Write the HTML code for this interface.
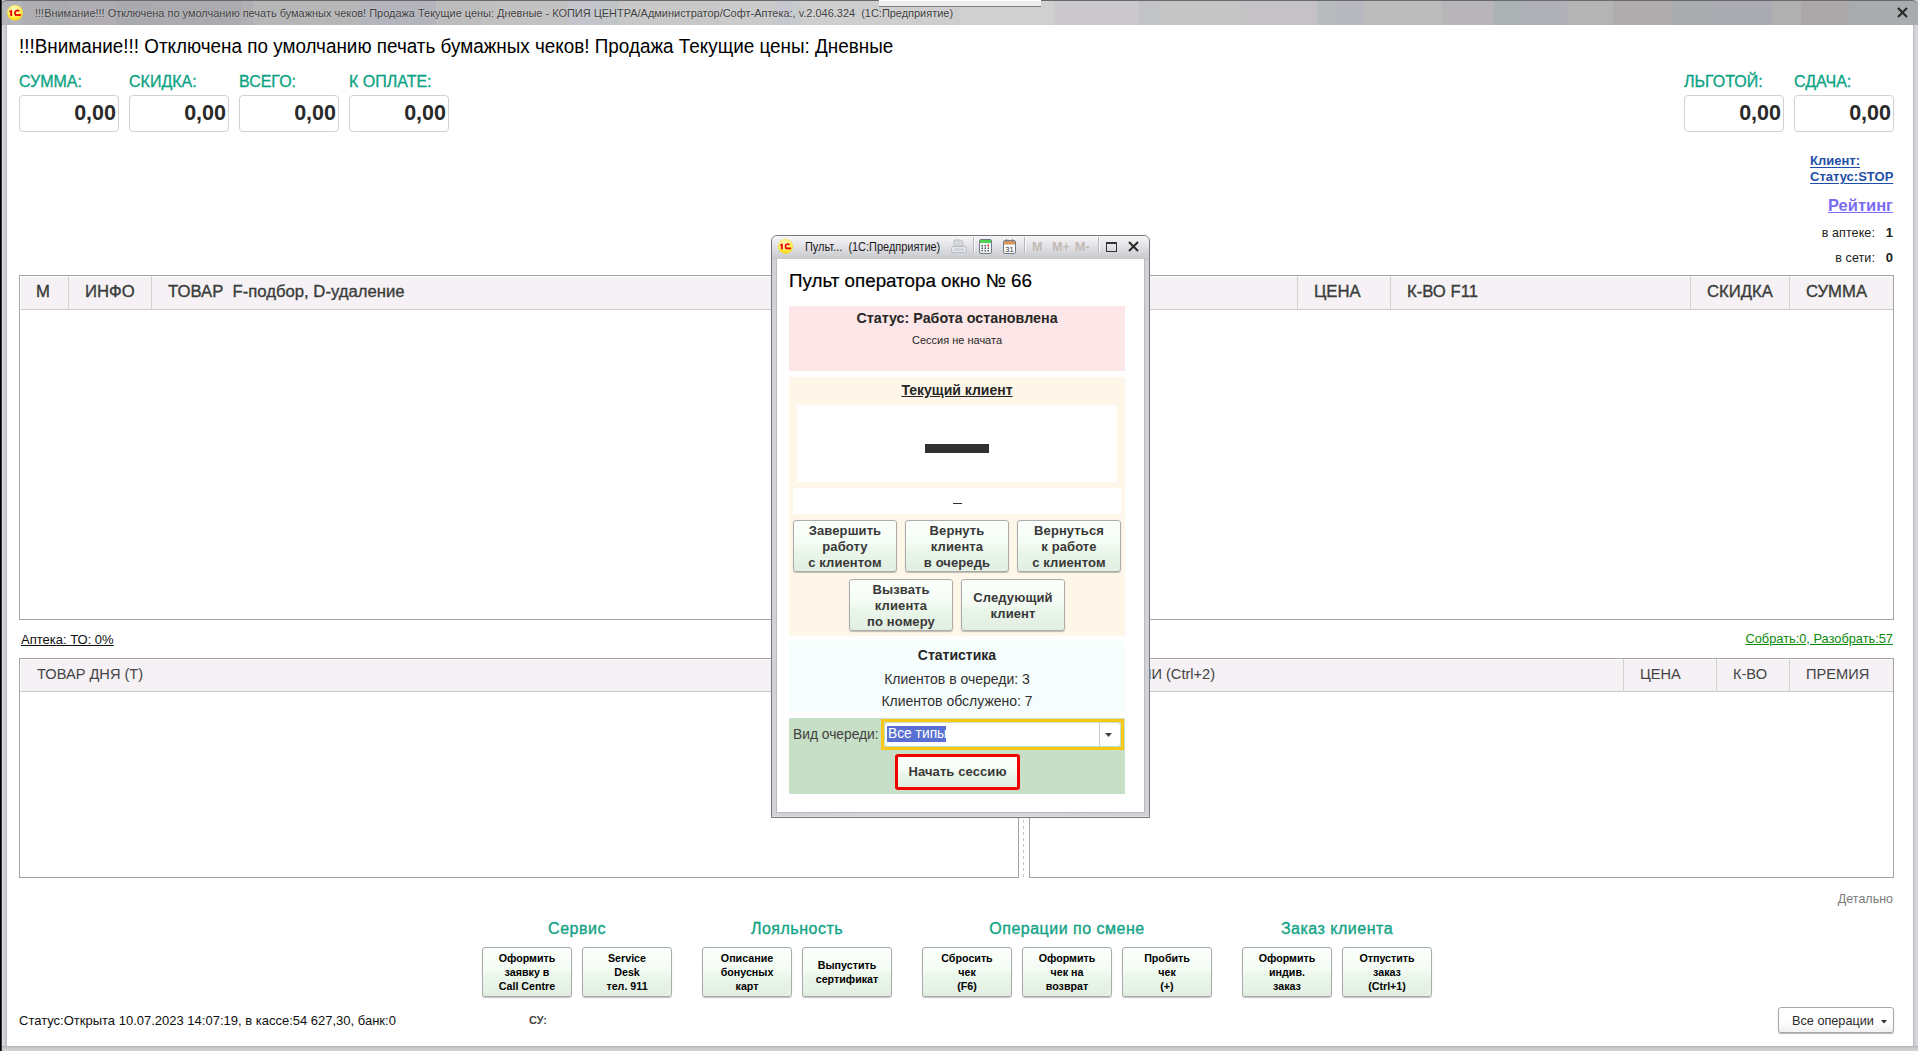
<!DOCTYPE html>
<html><head><meta charset="utf-8">
<style>
*{box-sizing:border-box}
html,body{margin:0;padding:0}
body{width:1918px;height:1051px;overflow:hidden;position:relative;background:#c4c6ca;font-family:"Liberation Sans",sans-serif;color:#000}
.a{position:absolute}
.t{position:absolute;white-space:nowrap;line-height:1}
/* outer window */
#lstrip{left:0;top:0;width:2px;height:1051px;background:linear-gradient(90deg,#000 0,#000 1px,#3a3a3a 1px)}
#frameL{left:2px;top:25px;width:5px;height:1026px;background:linear-gradient(90deg,#dcdce0 0,#d6d6da 1px,#cfcfd3 3px,#c4c4c8 4px,#b4b6ba 5px)}
#frameR{left:1913px;top:25px;width:5px;height:1026px;background:linear-gradient(90deg,#b4b8bc,#d4d4d8 40%,#d8d8dc)}
#frameB{left:2px;top:1046px;width:1916px;height:5px;background:linear-gradient(180deg,#b0b2b6,#c8cacd 40%,#cfd1d4)}
#title{left:1px;top:0;width:1917px;height:25px;border-top:1px solid #6a6a6e;border-radius:6px 6px 0 0;background:linear-gradient(90deg,#b2b4ba 0px,#b2b4ba 22px,#adadb2 22px,#adadb2 45px,#aaacb0 45px,#aaacb0 69px,#b0aeb2 69px,#b0aeb2 115px,#a9a9b0 115px,#a9a9b0 150px,#ababaf 150px,#ababaf 240px,#b0b0b4 240px,#b0b0b4 252px,#b6b6b6 252px,#b6b6b6 358px,#b4b4bc 358px,#b4b4bc 435px,#bcbcbc 435px,#bcbcbc 480px,#c0c0c0 480px,#c0c0c0 502px,#c2c2c2 502px,#c2c2c2 568px,#c4c4cc 568px,#c4c4cc 598px,#c0c6c8 598px,#c0c6c8 618px,#c8c8c8 618px,#c8c8c8 720px,#cacaca 720px,#cacaca 776px,#c6c6d0 776px,#c6c6d0 790px,#c6cccc 790px,#c6cccc 800px,#cecece 800px,#cecece 960px,#d0d0d0 960px,#d0d0d0 1053px,#cbc9cc 1053px,#cbc9cc 1138px,#c2c4c8 1138px,#c2c4c8 1161px,#c6c6c6 1161px,#c6c6c6 1240px,#c4c2c4 1240px,#c4c2c4 1316px,#b8bcbe 1316px,#b8bcbe 1333px,#b8b8c0 1333px,#b8b8c0 1363px,#bcbcbc 1363px,#bcbcbc 1440px,#b8b6b8 1440px,#b8b6b8 1493px,#aab2b2 1493px,#aab2b2 1520px,#b0b0b8 1520px,#b0b0b8 1566px,#b4b4b4 1566px,#b4b4b4 1612px,#b0acae 1612px,#b0acae 1671px,#a8acae 1671px,#a8acae 1708px,#aaaab2 1708px,#aaaab2 1771px,#b0b0b0 1771px,#b0b0b0 1800px,#aca8aa 1800px,#aca8aa 1848px,#a8acae 1848px,#a8acae 1918px)}
#content{left:7px;top:25px;width:1906px;height:1021px;background:#fff}
.lbl{color:#0aa283;font-size:16px;-webkit-text-stroke:.3px #0aa283}
.box{position:absolute;width:100px;height:37px;border:1px solid #d2d2d2;border-radius:4px;background:#fff}
.num{position:absolute;right:2px;top:7px;font-weight:bold;font-size:21.5px;color:#2a2a2a;line-height:1}
.tbl{position:absolute;border:1px solid #a4a4a4;background:#fff}
.th{position:absolute;left:0;top:0;right:0;background:#f5f1f5;border-bottom:1px solid #c9c9c9;border-top:1px solid #fff;border-left:1px solid #fff}
.sep{position:absolute;top:0;width:1px;background:#d2d2d2}
.hd{position:absolute;white-space:nowrap;line-height:1;color:#3a3c3a;-webkit-text-stroke:.35px #3a3c3a}
.btn{position:absolute;border:1px solid #a9aca9;border-radius:3px;background:linear-gradient(180deg,#fbfffb 0%,#f4fbf4 45%,#e9f6e9 60%,#e3eee3 100%);box-shadow:0 1px 1px rgba(0,0,0,.25);text-align:center;font-weight:bold}
.grp{top:921px;text-align:center;font-size:16px;letter-spacing:.5px;color:#12a386;-webkit-text-stroke:.35px #12a386}
.bb{font-size:10.7px;line-height:14px;color:#000}
.mb{font-size:13px;line-height:16px;color:#383838;letter-spacing:.1px}
</style></head><body>
<div id="title" class="a"></div>
<div id="lstrip" class="a"></div>
<div id="frameL" class="a"></div>
<div id="frameR" class="a"></div>
<div id="frameB" class="a"></div>
<div id="content" class="a"></div>

<!-- title bar -->
<svg width="0" height="0" style="position:absolute"><defs>
<radialGradient id="yg" cx="45%" cy="30%" r="70%"><stop offset="0" stop-color="#fffcc0"/><stop offset=".55" stop-color="#fff070"/><stop offset="1" stop-color="#ffd800"/></radialGradient>
<symbol id="logo1c" viewBox="0 0 18 18"><circle cx="9" cy="8.75" r="7.8" fill="url(#yg)"/><circle cx="9" cy="8.75" r="7.6" fill="none" stroke="#e8c830" stroke-width=".5" opacity=".6"/>
<path d="M3 7.3L5.3 5.9H6.1V12H4.3V7.9L3.3 8.3Z" fill="#e80000"/>
<path d="M13.2 7.2A2.4 2.4 0 1 0 9.6 10.6" fill="none" stroke="#e80000" stroke-width="1.7"/>
<rect x="9" y="10.1" width="5.8" height="1.8" fill="#e80000"/></symbol></defs></svg>
<svg class="a" style="left:6px;top:4px" width="18" height="18"><use href="#logo1c"/></svg>
<div class="t" style="left:35px;top:7px;font-size:11.6px;color:#404040;transform:scaleX(.945);transform-origin:0 0;text-shadow:0 0 2px rgba(255,255,255,.5)">!!!Внимание!!! Отключена по умолчанию печать бумажных чеков! Продажа Текущие цены: Дневные - КОПИЯ ЦЕНТРА/Администратор/Софт-Аптека:, v.2.046.324&nbsp; (1С:Предприятие)</div>
<div class="a" style="left:879px;top:0;width:162px;height:7px;background:linear-gradient(180deg,#fff 0,#fff 1px,#eeeeee 1px,#eeeeee 6px,#808080 6px)"></div>
<svg class="a" style="left:1896px;top:6px" width="13" height="13" viewBox="0 0 13 13"><path d="M2 2L11 11M11 2L2 11" stroke="#2a2a2a" stroke-width="2.2"/></svg>

<!-- headline -->
<div class="t" style="left:19px;top:37px;font-size:19.3px;transform:scaleX(.979);transform-origin:0 0">!!!Внимание!!! Отключена по умолчанию печать бумажных чеков! Продажа Текущие цены: Дневные</div>

<!-- totals -->
<div class="t lbl" style="left:19px;top:74px">СУММА:</div>
<div class="t lbl" style="left:129px;top:74px">СКИДКА:</div>
<div class="t lbl" style="left:239px;top:74px">ВСЕГО:</div>
<div class="t lbl" style="left:349px;top:74px">К ОПЛАТЕ:</div>
<div class="t lbl" style="left:1684px;top:74px">ЛЬГОТОЙ:</div>
<div class="t lbl" style="left:1794px;top:74px">СДАЧА:</div>
<div class="box" style="left:19px;top:95px"><span class="num">0,00</span></div>
<div class="box" style="left:129px;top:95px"><span class="num">0,00</span></div>
<div class="box" style="left:239px;top:95px"><span class="num">0,00</span></div>
<div class="box" style="left:349px;top:95px"><span class="num">0,00</span></div>
<div class="box" style="left:1684px;top:95px"><span class="num">0,00</span></div>
<div class="box" style="left:1794px;top:95px"><span class="num">0,00</span></div>

<!-- right links -->
<div class="t" style="left:1810px;top:154px;font-size:13px;font-weight:bold;color:#1f4fa8;text-decoration:underline;text-underline-offset:2px">Клиент:</div>
<div class="t" style="left:1810px;top:170px;font-size:13px;font-weight:bold;color:#1f4fa8;text-decoration:underline;text-underline-offset:2px">Статус:STOP</div>
<div class="t" style="right:25px;top:197px;font-size:16.5px;font-weight:bold;color:#7b6cf0;text-decoration:underline">Рейтинг</div>
<div class="t" style="right:43px;top:227px;font-size:12.5px;letter-spacing:.1px;color:#202020">в аптеке:</div>
<div class="t" style="right:25px;top:226px;font-size:13px;font-weight:bold;color:#202020">1</div>
<div class="t" style="right:43px;top:252px;font-size:12.5px;letter-spacing:.1px;color:#202020">в сети:</div>
<div class="t" style="right:25px;top:251px;font-size:13px;font-weight:bold;color:#202020">0</div>

<!-- main table -->
<div class="tbl" style="left:19px;top:275px;width:1875px;height:345px">
  <div class="th" style="height:34px"></div>
  <div class="sep" style="left:48px;height:34px"></div>
  <div class="sep" style="left:131px;height:34px"></div>
  <div class="sep" style="left:1277px;height:34px"></div>
  <div class="sep" style="left:1370px;height:34px"></div>
  <div class="sep" style="left:1670px;height:34px"></div>
  <div class="sep" style="left:1769px;height:34px"></div>
  <div class="hd" style="left:16px;top:8px;font-size:16.7px">М</div>
  <div class="hd" style="left:65px;top:8px;font-size:16.7px">ИНФО</div>
  <div class="hd" style="left:148px;top:8px;font-size:16.7px">ТОВАР&nbsp; F-подбор, D-удаление</div>
  <div class="hd" style="left:1294px;top:8px;font-size:16.7px">ЦЕНА</div>
  <div class="hd" style="left:1387px;top:8px;font-size:16.7px">К-ВО F11</div>
  <div class="hd" style="left:1687px;top:8px;font-size:16.7px">СКИДКА</div>
  <div class="hd" style="left:1786px;top:8px;font-size:16.7px">СУММА</div>
</div>

<div class="t" style="left:21px;top:633px;font-size:13px;color:#101010;text-decoration:underline">Аптека: ТО: 0%</div>
<div class="t" style="right:25px;top:633px;font-size:12.8px;color:#0a8a0a;text-decoration:underline">Собрать:0, Разобрать:57</div>

<!-- bottom tables -->
<div class="tbl" style="left:19px;top:658px;width:1000px;height:220px">
  <div class="th" style="height:33px"></div>
  <div class="hd" style="left:17px;top:7px;font-size:15.3px;color:#444;-webkit-text-stroke:0;transform:scaleX(.955);transform-origin:0 0">ТОВАР ДНЯ (Т)</div>
</div>
<div class="a" style="left:1023px;top:820px;width:1px;height:57px;background:repeating-linear-gradient(180deg,#c8c8c8 0 3px,transparent 3px 6px)"></div>
<div class="tbl" style="left:1029px;top:658px;width:865px;height:220px">
  <div class="th" style="height:33px"></div>
  <div class="sep" style="left:593px;height:33px"></div>
  <div class="sep" style="left:686px;height:33px"></div>
  <div class="sep" style="left:759px;height:33px"></div>
  <div class="hd" style="right:678px;top:7px;font-size:15.3px;color:#444;-webkit-text-stroke:0;transform:scaleX(.955);transform-origin:100% 0">АКЦИИ (Ctrl+2)</div>
  <div class="hd" style="left:610px;top:7px;font-size:15.3px;color:#444;-webkit-text-stroke:0;transform:scaleX(.955);transform-origin:0 0">ЦЕНА</div>
  <div class="hd" style="left:703px;top:7px;font-size:15.3px;color:#444;-webkit-text-stroke:0;transform:scaleX(.955);transform-origin:0 0">К-ВО</div>
  <div class="hd" style="left:776px;top:7px;font-size:15.3px;color:#444;-webkit-text-stroke:0;transform:scaleX(.955);transform-origin:0 0">ПРЕМИЯ</div>
</div>

<div class="t" style="right:25px;top:893px;font-size:12.5px;color:#7a7a7a">Детально</div>

<!-- groups -->
<div class="t grp" style="left:482px;width:190px">Сервис</div>
<div class="t grp" style="left:702px;width:190px">Лояльность</div>
<div class="t grp" style="left:922px;width:290px">Операции по смене</div>
<div class="t grp" style="left:1242px;width:190px">Заказ клиента</div>

<div class="btn bb" style="left:482px;top:947px;width:90px;height:50px;padding-top:3px">Оформить<br>заявку в<br>Call Centre</div>
<div class="btn bb" style="left:582px;top:947px;width:90px;height:50px;padding-top:3px">Service<br>Desk<br>тел. 911</div>
<div class="btn bb" style="left:702px;top:947px;width:90px;height:50px;padding-top:3px">Описание<br>бонусных<br>карт</div>
<div class="btn bb" style="left:802px;top:947px;width:90px;height:50px;padding-top:10px">Выпустить<br>сертификат</div>
<div class="btn bb" style="left:922px;top:947px;width:90px;height:50px;padding-top:3px">Сбросить<br>чек<br>(F6)</div>
<div class="btn bb" style="left:1022px;top:947px;width:90px;height:50px;padding-top:3px">Оформить<br>чек на<br>возврат</div>
<div class="btn bb" style="left:1122px;top:947px;width:90px;height:50px;padding-top:3px">Пробить<br>чек<br>(+)</div>
<div class="btn bb" style="left:1242px;top:947px;width:90px;height:50px;padding-top:3px">Оформить<br>индив.<br>заказ</div>
<div class="btn bb" style="left:1342px;top:947px;width:90px;height:50px;padding-top:3px">Отпустить<br>заказ<br>(Ctrl+1)</div>

<div class="t" style="left:19px;top:1014px;font-size:13px;color:#101010">Статус:Открыта 10.07.2023 14:07:19, в кассе:54 627,30, банк:0</div>
<div class="t" style="left:529px;top:1015px;font-size:11px;font-weight:bold;color:#444">СУ:</div>

<div class="a" style="left:1778px;top:1007px;width:116px;height:26px;border:1px solid #a8a8a8;border-radius:3px;background:linear-gradient(180deg,#fff 0%,#fff 55%,#f3f1f3 100%);box-shadow:0 1px 1px rgba(0,0,0,.3)">
  <span class="t" style="left:13px;top:7px;font-size:12.7px;color:#2a2a2a">Все операции</span>
  <svg class="a" style="left:102px;top:12px" width="6" height="4"><path d="M0 0H6L3 3.5Z" fill="#333"/></svg>
</div>

<!-- MODAL -->
<div id="modal" class="a" style="left:771px;top:235px;width:379px;height:583px;border:1px solid #78787c;border-radius:6px 6px 0 0;background:linear-gradient(90deg,#d2d2d6,#d6d6da 50%,#d2d2d6);overflow:hidden">
  <div class="a" style="left:0;top:0;width:377px;height:24px;background:linear-gradient(180deg,#f6f6f8 0%,#e4e4e8 40%,#d2d3d7 75%,#c4c6ca 100%)"></div>
  <div class="a" style="left:4px;top:23px;width:369px;height:554px;background:#b8babd"></div>
  <div class="a" style="left:5px;top:23px;width:367px;height:553px;background:#fff"></div>
  <div class="a" style="left:0;bottom:0;width:377px;height:1px;background:#e2e2e4"></div>
</div>

<!-- modal title -->
<svg class="a" style="left:776.5px;top:238px" width="17" height="17" viewBox="0 0 18 18"><use href="#logo1c"/></svg>
<div class="t" style="left:805px;top:241px;font-size:12px;color:#1a1a1a;transform:scaleX(.913);transform-origin:0 0">Пульт... &nbsp;(1С:Предприятие)</div>
<!-- printer -->
<svg class="a" style="left:950px;top:239px" width="18" height="16" viewBox="0 0 18 16">
 <path d="M4 1H11L13 3V7H4Z" fill="#d8d8dc" stroke="#c0c4cc" stroke-width="1"/>
 <rect x="1.5" y="7.5" width="15" height="6" rx="2" fill="#e4e6ea" stroke="#b4bcc8"/>
 <rect x="4" y="9.5" width="10" height="2" fill="#c4ccd8"/>
</svg>
<div class="a" style="left:973px;top:237px;width:1px;height:16px;background:#b8b8bc;box-shadow:1px 0 0 #fafafa"></div>
<!-- calculator -->
<svg class="a" style="left:979px;top:239px" width="13" height="15" viewBox="0 0 13 15">
 <rect x="0.5" y="0.5" width="12" height="14" rx="1.5" fill="#f4f6f8" stroke="#6e7a84"/>
 <rect x="1" y="1" width="11" height="3" fill="#4ed24e"/>
 <g fill="#505860"><rect x="2.5" y="6" width="1.5" height="1.5"/><rect x="5.5" y="6" width="1.5" height="1.5"/><rect x="2.5" y="8.5" width="1.5" height="1.5"/><rect x="5.5" y="8.5" width="1.5" height="1.5"/><rect x="8.5" y="8.5" width="1.5" height="1.5"/><rect x="2.5" y="11" width="1.5" height="1.5"/><rect x="5.5" y="11" width="1.5" height="1.5"/><rect x="8.5" y="11" width="1.5" height="1.5"/></g>
 <rect x="8.5" y="5.5" width="1.5" height="2" fill="#e83030"/>
</svg>
<!-- calendar -->
<svg class="a" style="left:1003px;top:239px" width="13" height="15" viewBox="0 0 13 15">
 <rect x="0.5" y="1.5" width="12" height="13" rx="1.5" fill="#fbfbfd" stroke="#6e7a84"/>
 <rect x="1" y="2" width="11" height="3.5" fill="#d8965a"/>
 <rect x="3" y="0" width="1" height="3" fill="#888"/><rect x="9" y="0" width="1" height="3" fill="#888"/>
 <text x="6.5" y="13" font-family="Liberation Sans" font-size="7.5" text-anchor="middle" fill="#333">31</text>
</svg>
<div class="a" style="left:1024px;top:237px;width:1px;height:16px;background:#b8b8bc;box-shadow:1px 0 0 #fafafa"></div>
<div class="t" style="left:1032px;top:241px;font-size:12.5px;font-weight:bold;color:#c2bab2">M</div>
<div class="t" style="left:1052px;top:241px;font-size:12.5px;font-weight:bold;color:#c2bab2">M+</div>
<div class="t" style="left:1075px;top:241px;font-size:12.5px;font-weight:bold;color:#c2bab2">M-</div>
<div class="a" style="left:1098px;top:237px;width:1px;height:16px;background:#b8b8bc;box-shadow:1px 0 0 #fafafa"></div>
<div class="a" style="left:1106px;top:242px;width:11px;height:10px;border:1.5px solid #333;border-top-width:2.5px"></div>
<svg class="a" style="left:1128px;top:241px" width="11" height="11" viewBox="0 0 11 11"><path d="M1 1L10 10M10 1L1 10" stroke="#2a2a2a" stroke-width="2"/></svg>

<!-- modal body -->
<div class="t" style="left:789px;top:272px;font-size:18.8px;color:#000;-webkit-text-stroke:.2px #000">Пульт оператора окно № 66</div>
<div class="a" style="left:789px;top:306px;width:336px;height:65px;background:#fde6e7"></div>
<div class="t" style="left:789px;width:336px;text-align:center;top:311px;font-size:14.3px;font-weight:bold;color:#262626">Статус: Работа остановлена</div>
<div class="t" style="left:789px;width:336px;text-align:center;top:335px;font-size:11px;color:#262626">Сессия не начата</div>

<div class="a" style="left:789px;top:377px;width:336px;height:259px;background:#fef6e8"></div>
<div class="t" style="left:789px;width:336px;text-align:center;top:383px;font-size:14px;font-weight:bold;color:#262626;text-decoration:underline">Текущий клиент</div>
<div class="a" style="left:797px;top:405px;width:320px;height:77px;background:#fff"></div>
<div class="a" style="left:925px;top:444px;width:64px;height:9px;background:#303030"></div>
<div class="a" style="left:793px;top:488px;width:328px;height:26px;background:#fff"></div>
<div class="a" style="left:953px;top:503px;width:9px;height:1px;background:#303030"></div>

<div class="btn mb" style="left:793px;top:520px;width:104px;height:52px;padding-top:2px">Завершить<br>работу<br>с клиентом</div>
<div class="btn mb" style="left:905px;top:520px;width:104px;height:52px;padding-top:2px">Вернуть<br>клиента<br>в очередь</div>
<div class="btn mb" style="left:1017px;top:520px;width:104px;height:52px;padding-top:2px">Вернуться<br>к работе<br>с клиентом</div>
<div class="btn mb" style="left:849px;top:579px;width:104px;height:52px;padding-top:2px">Вызвать<br>клиента<br>по номеру</div>
<div class="btn mb" style="left:961px;top:579px;width:104px;height:52px;padding-top:10px">Следующий<br>клиент</div>

<div class="a" style="left:789px;top:641px;width:336px;height:71px;background:#f5fdfd"></div>
<div class="t" style="left:789px;width:336px;text-align:center;top:648px;font-size:14px;font-weight:bold;color:#262626">Статистика</div>
<div class="t" style="left:789px;width:336px;text-align:center;top:672px;font-size:14px;color:#303030">Клиентов в очереди: 3</div>
<div class="t" style="left:789px;width:336px;text-align:center;top:694px;font-size:14px;color:#303030">Клиентов обслужено: 7</div>

<div class="a" style="left:789px;top:718px;width:336px;height:76px;background:#c6dfc6"></div>
<div class="t" style="left:793px;top:728px;font-size:13.8px;color:#404040">Вид очереди:</div>
<div class="a" style="left:881px;top:719px;width:243px;height:31px;border:3px solid #f8c818;background:#c6dfc6"></div>
<div class="a" style="left:885px;top:723px;width:235px;height:23px;border-radius:3px;background:#fff"></div>
<div class="a" style="left:1099px;top:723px;width:1px;height:23px;background:#c8c8c8"></div>
<svg class="a" style="left:1105px;top:733px" width="7" height="4"><path d="M0 0H7L3.5 4Z" fill="#444"/></svg>
<div class="a" style="left:887px;top:726px;width:59px;height:16px;background:#5a6fd2"></div>
<div class="t" style="left:888px;top:727px;font-size:13.8px;color:#fff">Все типы</div>
<div class="btn mb" style="left:895px;top:754px;width:125px;height:36px;border:3px solid #f20000;border-radius:3px;padding-top:7px;box-shadow:none">Начать сессию</div>

</body></html>
